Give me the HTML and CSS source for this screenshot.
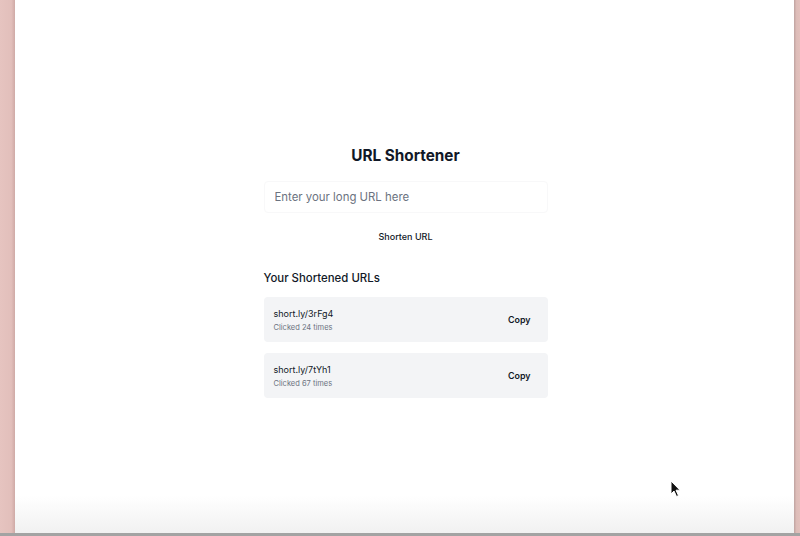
FILE: index.html
```html
<!DOCTYPE html>
<html lang="en">
<head>
<meta charset="utf-8">
<title>URL Shortener</title>
<link rel="stylesheet" href="styles.css">
</head>
<body>
<div class="screen">
  <div class="row">
    <div class="edge-left"></div>
    <main class="page">
      <section class="app">
        <h1 class="title">URL Shortener</h1>
        <input class="url-input" type="text" placeholder="Enter your long URL here">
        <button class="shorten-btn" type="button">Shorten URL</button>
        <h2 class="list-title">Your Shortened URLs</h2>
        <ul class="links">
          <li class="link-card">
            <div class="link-info">
              <span class="link-url">short.ly/3rFg4</span>
              <span class="link-clicks">Clicked 24 times</span>
            </div>
            <button class="copy-btn" type="button">Copy</button>
          </li>
          <li class="link-card">
            <div class="link-info">
              <span class="link-url">short.ly/7tYh1</span>
              <span class="link-clicks">Clicked 67 times</span>
            </div>
            <button class="copy-btn" type="button">Copy</button>
          </li>
        </ul>
      </section>
      <svg class="cursor" width="12" height="18" viewBox="0 0 12 18" aria-hidden="true">
        <path d="M1 1 L1 14 L4 11 L6.5 16.5 L8.5 15.6 L6 10.2 L10 10.2 Z" fill="#111" stroke="#fff" stroke-width="1"/>
      </svg>
    </main>
    <div class="edge-right"></div>
  </div>
  <div class="bottom-line"></div>
</div>
</body>
</html>
```

FILE: styles.css
```css
* { box-sizing: border-box; }
html, body { margin: 0; padding: 0; }
body {
  font-family: Inter, "Noto Sans", sans-serif;
  color: #111827;
  background: #fff;
}
.screen {
  width: 800px;
  height: 536px;
  display: flex;
  flex-direction: column;
  overflow: hidden;
}
.row {
  flex: 1;
  display: flex;
}
.edge-left {
  width: 15px;
  background: linear-gradient(to right, #e6c4c0 0%, #e2bfbb 75%, #cfaaa6 100%);
}
.edge-right {
  width: 6px;
  background: linear-gradient(to right, #bfa3a0 0%, #ddbcb8 40%, #e2c0bc 100%);
}
.page {
  position: relative;
  flex: 1;
  padding-left: 2px;
  background: linear-gradient(to bottom, #ffffff 0%, #ffffff 93%, #f1f1f1 100%);
  display: flex;
  justify-content: center;
}
.app {
  width: 284px;
  padding-top: 142px;
  display: flex;
  flex-direction: column;
}
.title {
  margin: 0;
  font-size: 15.3px;
  line-height: 28px;
  font-weight: 700;
  text-align: center;
  color: #111827;
}
.url-input {
  margin-top: 11px;
  height: 32px;
  width: 100%;
  border: 1px solid #f8f8f9;
  border-radius: 4px;
  padding: 0 10px;
  font-family: inherit;
  font-size: 11.4px;
  color: #111827;
  background: #fff;
  outline: none;
}
.url-input::placeholder { color: #6b7280; }
.shorten-btn {
  margin-top: 4px;
  height: 38px;
  border: none;
  background: transparent;
  font-family: inherit;
  font-size: 9px;
  font-weight: 500;
  color: #111827;
  cursor: pointer;
}
.list-title {
  margin: 13px 0 0;
  font-size: 11.4px;
  line-height: 20px;
  font-weight: 500;
  color: #111827;
}
.links {
  list-style: none;
  margin: 9px 0 0;
  padding: 0;
  display: flex;
  flex-direction: column;
  gap: 11px;
}
.link-card {
  height: 45px;
  background: #f3f4f6;
  border-radius: 4px;
  padding: 0 17px 0 10px;
  display: flex;
  align-items: center;
  justify-content: space-between;
}
.link-info {
  display: flex;
  flex-direction: column;
  gap: 1px;
  padding-top: 2px;
}
.link-url {
  font-size: 9px;
  line-height: 14px;
  color: #111827;
}
.link-clicks {
  font-size: 7.5px;
  line-height: 12px;
  color: #6b7280;
}
.copy-btn {
  border: none;
  background: transparent;
  padding: 0;
  font-family: inherit;
  font-size: 8.9px;
  font-weight: 600;
  color: #111827;
  cursor: pointer;
}
.cursor {
  position: absolute;
  left: 655px;
  top: 480px;
}
.bottom-line {
  height: 3px;
  background: #a3a3a3;
}
```
